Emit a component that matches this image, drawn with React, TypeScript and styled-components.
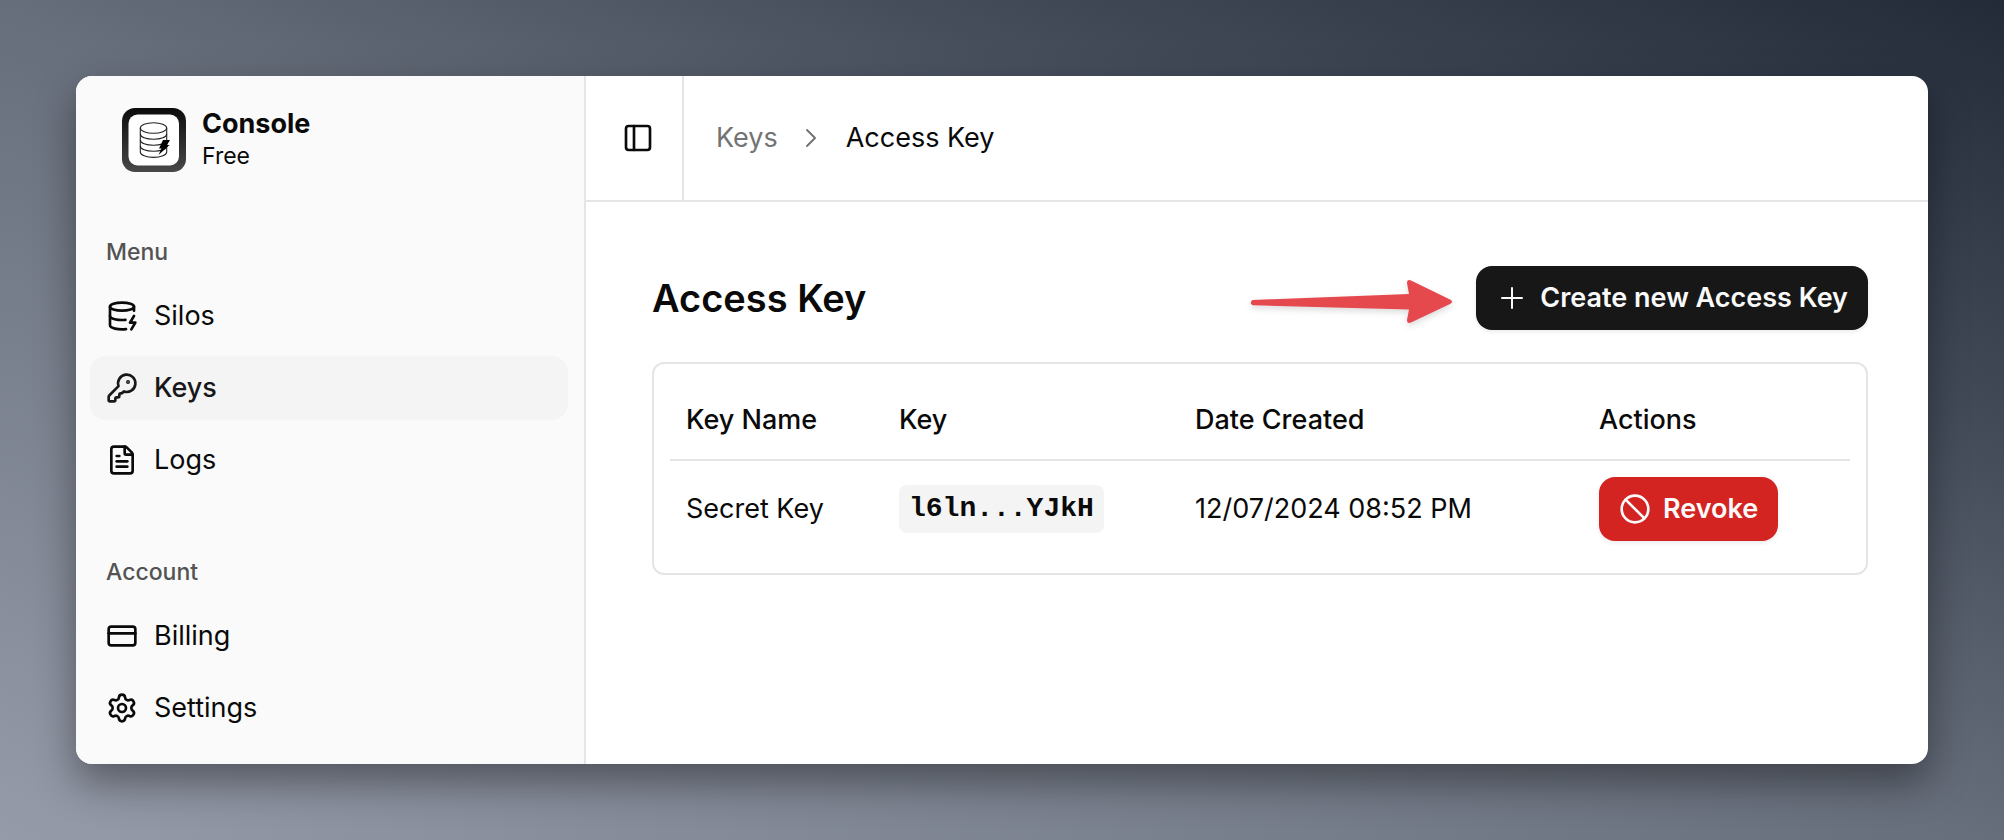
import React from 'react';
import styled, { createGlobalStyle } from 'styled-components';
import { Ban, CreditCard, DatabaseZap, FileText, KeyRound, PanelLeft, Settings } from 'lucide-react';

const GlobalStyle = createGlobalStyle`
  * { box-sizing: border-box; }
  body {
    margin: 0;
    font-family: Inter, "Liberation Sans", sans-serif;
    font-size: 27px;
    line-height: 40px;
    color: #0a0a0a;
  }
`;

const Backdrop = styled.div`
  display: flex;
  min-height: 100vh;
  padding: 76px;
  background: linear-gradient(to bottom left, #232b39 0%, #434b59 26%, #676e7b 50%, #959ba9 100%);
`;

const Window = styled.div`
  display: flex;
  flex: 1;
  min-width: 0;
  overflow: hidden;
  border-radius: 16px;
  background: #fff;
  box-shadow: 0 18px 40px rgba(0, 0, 0, 0.4);
`;

const Sidebar = styled.aside`
  display: flex;
  flex: 0 0 510px;
  flex-direction: column;
  gap: 48px;
  padding: 32px 16px 22px 14px;
  border-right: 2px solid #e5e5e5;
  background: #fafafa;
`;

const Brand = styled.div`
  display: flex;
  align-items: center;
  gap: 16px;
  padding-left: 32px;
`;

const BrandText = styled.div`
  display: flex;
  flex-direction: column;
  line-height: 32px;
`;

const BrandName = styled.span`
  font-weight: 700;
`;

const Plan = styled.span`
  font-size: 23px;
`;

const GroupLabel = styled.h2`
  margin: 0;
  padding: 0 16px;
  font-size: 23px;
  font-weight: 500;
  line-height: 64px;
  color: #535353;
`;

const Menu = styled.ul`
  display: flex;
  flex-direction: column;
  gap: 8px;
  margin: 0;
  padding: 0;
  list-style: none;
`;

const MenuLink = styled.a<{ $active?: boolean }>`
  display: flex;
  align-items: center;
  gap: 16px;
  height: 64px;
  padding: 0 16px;
  border-radius: 16px;
  color: ${(p) => (p.$active ? '#18181b' : '#0a0a0a')};
  background: ${(p) => (p.$active ? '#f4f4f4' : 'transparent')};
  font-weight: ${(p) => (p.$active ? 500 : 400)};
  text-decoration: none;
`;

const Main = styled.main`
  flex: 1;
  min-width: 0;
`;

const Header = styled.header`
  display: flex;
  height: 126px;
  border-bottom: 2px solid #e5e5e5;
`;

const ToggleButton = styled.button`
  display: flex;
  align-items: center;
  justify-content: center;
  width: 98px;
  padding: 0 0 0 8px;
  border: 0;
  border-right: 2px solid #e5e5e5;
  background: none;
  color: inherit;
`;

const Breadcrumb = styled.nav`
  display: flex;
  align-items: center;
  gap: 20px;
  padding-left: 32px;
`;

const CrumbLink = styled.a`
  color: #737373;
  text-decoration: none;
`;

const Content = styled.div`
  padding: 64px 60px 64px 66px;
`;

const TitleRow = styled.div`
  display: flex;
  align-items: center;
  gap: 24px;
  margin-bottom: 32px;
`;

const Title = styled.h1`
  margin: 0 auto 0 0;
  font-size: 38px;
  font-weight: 600;
  line-height: 48px;
`;

const ActionButton = styled.button<{ $danger?: boolean }>`
  display: inline-flex;
  align-items: center;
  gap: 12px;
  height: 64px;
  padding: 0 20px;
  border: 0;
  border-radius: 16px;
  background: ${(p) => (p.$danger ? '#d32422' : '#171717')};
  color: #fafafa;
  font: inherit;
  font-weight: 600;
  white-space: nowrap;
  box-shadow: 0 2px 4px rgba(0, 0, 0, 0.08);
`;

const Card = styled.section`
  padding: 16px;
  border: 2px solid #e5e5e5;
  border-radius: 12px;
`;

const Table = styled.table`
  width: 100%;
  table-layout: fixed;
  border-collapse: separate;
  border-spacing: 0;
  white-space: nowrap;
`;

const Column = styled.col<{ $width: number }>`
  width: ${(p) => p.$width}px;
`;

const HeadCell = styled.th`
  height: 81px;
  padding: 0 16px;
  border-bottom: 2px solid #e5e5e5;
  font-weight: 500;
  text-align: left;
`;

const Cell = styled.td`
  height: 96px;
  padding: 0 16px;

  > * {
    vertical-align: middle;
  }
`;

const KeyChip = styled.code`
  display: inline-block;
  padding: 4px 10px;
  border-radius: 8px;
  background: #f4f4f4;
  font-family: "Liberation Mono", monospace;
  font-size: 28px;
  font-weight: 700;
`;

const Logo = () => (
  <svg width="64" height="64" viewBox="0 0 64 64" aria-hidden="true">
    <defs>
      <linearGradient id="frame" x1="0" y1="0" x2="0" y2="1">
        <stop offset="0" stopColor="#0c0c0c" />
        <stop offset="1" stopColor="#484848" />
      </linearGradient>
    </defs>
    <rect width="64" height="64" rx="13" fill="url(#frame)" />
    <rect x="6.500" y="6.500" width="50.500" height="51" rx="9" fill="#fff" />
    <g fill="none" stroke="#222" strokeWidth="1.100">
      <ellipse cx="31.500" cy="20" rx="13.200" ry="5.300" />
      <path d="M18.300 20V44C18.300 47 24 49.400 31.500 49.400S44.700 47 44.700 44V20" />
      <path d="M18.300 26C18.300 29 24 31.300 31.500 31.300S44.700 29 44.700 26" />
      <path d="M18.300 32C18.300 35 24 37.300 31.500 37.300S44.700 35 44.700 32" />
      <path d="M18.300 38C18.300 41 24 43.300 31.500 43.300S44.700 41 44.700 38" />
    </g>
    <path d="M41 32H48L45 37H47.500L36.500 47L39.500 40.500H37Z" fill="#000" />
  </svg>
);

const ChevronIcon = () => (
  <svg width="28" height="28" viewBox="0 0 28 28" fill="none" stroke="#737373" strokeWidth="2" strokeLinecap="round" strokeLinejoin="round" aria-hidden="true">
    <path d="M9 6L17 14L9 22" />
  </svg>
);

const PlusIcon = () => (
  <svg width="32" height="32" viewBox="0 0 32 32" fill="none" stroke="currentColor" strokeWidth="2" strokeLinecap="round" aria-hidden="true">
    <path d="M16 6V26M6 16H26" />
  </svg>
);

const ArrowDrawing = styled.svg`
  flex: none;
  overflow: visible;
  filter: drop-shadow(0 3px 3px rgba(0, 0, 0, 0.14));
`;

const Arrow = () => (
  <ArrowDrawing width="202" height="50" viewBox="0 -7 202 50" aria-hidden="true">
    <path
      d="M2.500 20L159 14L157 3Q157 -1 161 0.500L200 19.500Q204 21.500 200 24L161 42.500Q157 44 157 40L159 29.500L2.500 25.300Q-1 22.600 2.500 20Z"
      fill="#e5484d"
    />
  </ArrowDrawing>
);

const menuItems = [
  { label: 'Silos', Icon: DatabaseZap },
  { label: 'Keys', Icon: KeyRound, active: true },
  { label: 'Logs', Icon: FileText },
];

const accountItems = [
  { label: 'Billing', Icon: CreditCard },
  { label: 'Settings', Icon: Settings },
];

type Item = { label: string; Icon: React.ElementType; active?: boolean };

const MenuGroup = ({ title, items }: { title: string; items: Item[] }) => (
  <nav aria-label={title}>
    <GroupLabel>{title}</GroupLabel>
    <Menu>
      {items.map(({ label, Icon, active }) => (
        <li key={label}>
          <MenuLink href="#" $active={active} aria-current={active ? 'page' : undefined}>
            <Icon size={32} />
            {label}
          </MenuLink>
        </li>
      ))}
    </Menu>
  </nav>
);

export default function App() {
  return (
    <>
      <GlobalStyle />
      <Backdrop>
        <Window>
          <Sidebar>
            <Brand>
              <Logo />
              <BrandText>
                <BrandName>Console</BrandName>
                <Plan>Free</Plan>
              </BrandText>
            </Brand>
            <MenuGroup title="Menu" items={menuItems} />
            <MenuGroup title="Account" items={accountItems} />
          </Sidebar>
          <Main>
            <Header>
              <ToggleButton aria-label="Toggle sidebar">
                <PanelLeft size={32} />
              </ToggleButton>
              <Breadcrumb aria-label="Breadcrumb">
                <CrumbLink href="#">Keys</CrumbLink>
                <ChevronIcon />
                <span aria-current="page">Access Key</span>
              </Breadcrumb>
            </Header>
            <Content>
              <TitleRow>
                <Title>Access Key</Title>
                <Arrow />
                <ActionButton>
                  <PlusIcon />
                  Create new Access Key
                </ActionButton>
              </TitleRow>
              <Card>
                <Table>
                  <colgroup>
                    <Column $width={213} />
                    <Column $width={296} />
                    <Column $width={404} />
                    <Column $width={267} />
                  </colgroup>
                  <thead>
                    <tr>
                      <HeadCell scope="col">Key Name</HeadCell>
                      <HeadCell scope="col">Key</HeadCell>
                      <HeadCell scope="col">Date Created</HeadCell>
                      <HeadCell scope="col">Actions</HeadCell>
                    </tr>
                  </thead>
                  <tbody>
                    <tr>
                      <Cell>Secret Key</Cell>
                      <Cell>
                        <KeyChip>l6ln...YJkH</KeyChip>
                      </Cell>
                      <Cell>12/07/2024 08:52 PM</Cell>
                      <Cell>
                        <ActionButton $danger>
                          <Ban size={32} />
                          Revoke
                        </ActionButton>
                      </Cell>
                    </tr>
                  </tbody>
                </Table>
              </Card>
            </Content>
          </Main>
        </Window>
      </Backdrop>
    </>
  );
}
